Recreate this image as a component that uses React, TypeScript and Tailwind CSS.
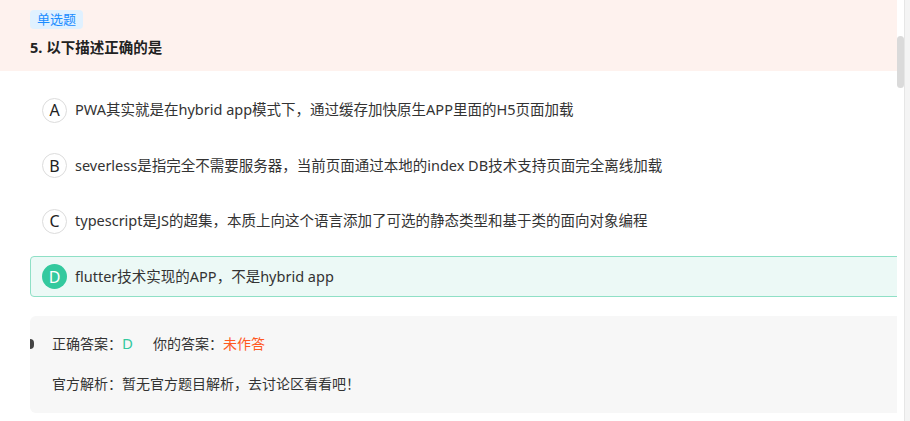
const options = [
  { key: "A", text: "PWA其实就是在hybrid app模式下，通过缓存加快原生APP里面的H5页面加载" },
  { key: "B", text: "severless是指完全不需要服务器，当前页面通过本地的index DB技术支持页面完全离线加载" },
  { key: "C", text: "typescript是JS的超集，本质上向这个语言添加了可选的静态类型和基于类的面向对象编程" },
  { key: "D", text: "flutter技术实现的APP，不是hybrid app", correct: true },
];

function Option({ k, text, correct }: { k: string; text: string; correct?: boolean }) {
  return (
    <div
      className={
        correct
          ? "flex items-center h-[41px] ml-[30px] -mr-[10px] pl-[11px] border border-[#8fe0c6] bg-[#ecf9f6] rounded-[4px]"
          : "flex items-center h-[41px] ml-[30px] pl-[12px]"
      }
    >
      <span
        className={
          correct
            ? "w-[25px] h-[25px] rounded-full bg-[#33c99e] text-white flex items-center justify-center text-[16px]"
            : "w-[25px] h-[25px] rounded-full border border-[#dcdcdc] bg-white text-[#222] flex items-center justify-center text-[16px]"
        }
      >
        {k}
      </span>
      <span className="ml-[8px] text-[14.5px] text-[#333]">{text}</span>
    </div>
  );
}

export default function App() {
  return (
    <div
      className="flex w-[910px] h-[421px] overflow-hidden bg-white"
      style={{ fontFamily: '"Noto Sans", "Noto Sans CJK SC", sans-serif' }}
    >
      <div className="w-[897px] shrink-0 overflow-hidden">
        {/* Header */}
        <div className="h-[71px] bg-[#fef2ee] pl-[30px] pt-[6px]">
          <span className="inline-flex items-center h-[19px] px-[7px] rounded-[4px] bg-[#e0f1ff] text-[#1a8cff] text-[13px]">
            单选题
          </span>
          <div className="mt-[7px] text-[14.5px] font-bold text-[#222] leading-[20px]">5. 以下描述正确的是</div>
        </div>

        {/* Options */}
        <div className="pt-[18.5px] flex flex-col gap-[14.5px]">
          {options.map((o) => (
            <Option key={o.key} k={o.key} text={o.text} correct={o.correct} />
          ))}
        </div>

        {/* Answer */}
        <div className="relative mt-[19px] ml-[30px] -mr-[10px] h-[97px] rounded-[6px] bg-[#f7f7f7] pl-[22px] pt-[16px] text-[14px] text-[#333]">
          <span className="absolute left-0 top-[23px] w-[4px] h-[10px] rounded-r-full bg-[#444]" />
          <div className="h-[22px] flex items-center">
            <span>正确答案：</span>
            <span className="text-[#33c99e] text-[15px]">D</span>
            <span className="ml-[20px]">你的答案：</span>
            <span className="text-[#ff5a1f]">未作答</span>
          </div>
          <div className="mt-[18px] h-[22px] flex items-center">官方解析：暂无官方题目解析，去讨论区看看吧！</div>
        </div>
      </div>

      {/* Scrollbar */}
      <div className="w-[7px] shrink-0 pt-[36px]">
        <div className="h-[52px] w-[7px] rounded-full bg-[#dadada]" />
      </div>
      <div className="w-[6px] shrink-0 border-l border-[#e6e6e6] bg-[#f4f4f4]" />
    </div>
  );
}
